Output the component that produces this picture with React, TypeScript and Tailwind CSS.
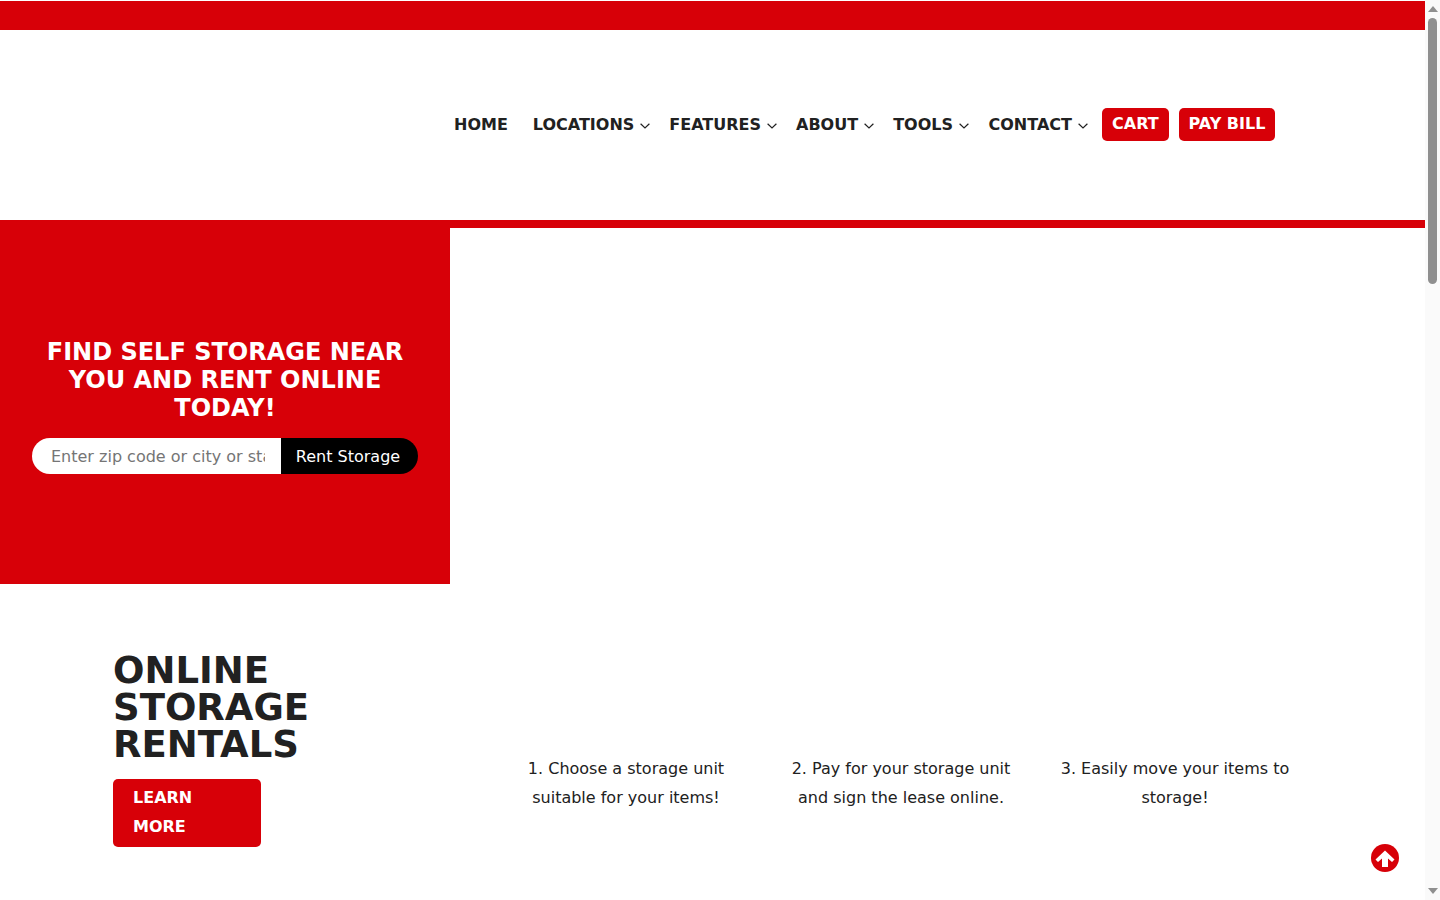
import React from "react";

function Chevron() {
  return (
    <svg width="10" height="6" viewBox="0 0 10 6" fill="none" stroke="#212121" strokeWidth="1.2" className="ml-[6px] mt-[3px]">
      <path d="M0.6 0.8 L5 5 L9.4 0.8" />
    </svg>
  );
}

function NavItem({ label, className }: { label: string; className: string }) {
  return (
    <div className={"flex items-center " + className}>
      <span>{label}</span>
      <Chevron />
    </div>
  );
}

function Step({ text, className }: { text: React.ReactNode; className: string }) {
  return <p className={"text-center text-[16px] leading-[29px] text-[#212121] " + className}>{text}</p>;
}

function Scrollbar() {
  return (
    <aside className="flex h-full w-[15px] shrink-0 flex-col items-center bg-[#fafafa]">
      <svg width="10" height="6" viewBox="0 0 10 6" className="mt-[6px] shrink-0" fill="#8f8f8f">
        <path d="M5 0 L10 6 H0 Z" />
      </svg>
      <div className="mt-[6px] h-[266px] w-[9px] rounded-full bg-[#8f8f8f]" />
      <svg width="10" height="6" viewBox="0 0 10 6" className="mb-[6px] mt-auto shrink-0" fill="#8f8f8f">
        <path d="M0 0 H10 L5 6 Z" />
      </svg>
    </aside>
  );
}

export default function App() {
  return (
    <div className="flex h-screen overflow-hidden bg-white text-[#212121] font-['DejaVu_Sans',sans-serif]">
      <main className="w-[1425px] shrink-0">
        <div className="mt-px h-[29px] bg-[#d70008]" />
        <header className="flex h-[190px] items-center pl-[454px] pb-px text-[16px] font-bold">
          <span className="mr-[25px]">HOME</span>
          <NavItem label="LOCATIONS" className="mr-[19px]" />
          <NavItem label="FEATURES" className="mr-[19px]" />
          <NavItem label="ABOUT" className="mr-[19px]" />
          <NavItem label="TOOLS" className="mr-[19.5px]" />
          <NavItem label="CONTACT" className="mr-[14.5px]" />
          <button className="mr-[10px] flex h-[33px] w-[67px] items-center justify-center rounded-[5px] bg-[#d70008] pb-[2px] pr-px text-white font-bold">CART</button>
          <button className="flex h-[33px] w-[96px] items-center justify-center rounded-[5px] bg-[#d70008] pb-[2px] pr-px text-white font-bold">PAY BILL</button>
        </header>
        <div className="h-[8px] bg-[#d70008]" />
        <section className="flex h-[356px]">
          <div className="flex w-[450px] flex-col items-center justify-center bg-[#d70008] px-[32px] py-[1px]">
            <h1 className="text-center text-[24px] font-bold leading-[28px] text-white">
              FIND SELF STORAGE NEAR YOU AND RENT ONLINE TODAY!
            </h1>
            <div className="mt-[16px] flex h-[36px] w-[386px]">
              <input
                readOnly
                placeholder="Enter zip code or city or state"
                className="h-full w-[249px] rounded-l-full bg-white pl-[19px] pr-[16px] pt-px text-[16px] text-[#212121] outline-none placeholder:text-[#757575]"
              />
              <button className="h-full w-[137px] rounded-r-full bg-black pr-[3px] pt-px text-[16px] text-white">Rent Storage</button>
            </div>
          </div>
        </section>
        <section className="flex pt-[68px]">
          <div className="ml-[113px] w-[215px]">
            <h2 className="text-[37px] font-bold leading-[37px] text-[#212121]">
              ONLINE STORAGE RENTALS
            </h2>
            <button className="mt-[16px] h-[68px] w-[148px] rounded-[5px] bg-[#d70008] pb-[2px] pl-[20px] pr-[40px] text-left text-[16px] font-bold leading-[29px] text-white">
              LEARN MORE
            </button>
          </div>
          <div className="ml-[183px] flex pt-[102px]">
            <Step className="w-[230px]" text={<>1. Choose a storage unit<br />suitable for your items!</>} />
            <Step className="ml-[45px] w-[230px]" text={<>2. Pay for your storage unit<br />and sign the lease online.</>} />
            <Step className="ml-[44px] w-[230px]" text={<>3. Easily move your items to<br />storage!</>} />
          </div>
        </section>
      </main>
      <Scrollbar />
      <button className="fixed bottom-[28px] right-[41px] h-[28px] w-[28px]">
        <svg width="28" height="28" viewBox="0 0 28 28">
          <circle cx="14" cy="14" r="14" fill="#d70008" />
          <path fill="white" d="M14 6.5 L23.5 15.5 L21 18 L17 14.5 V23 H11 V14.5 L7 18 L4.5 15.5 Z" />
        </svg>
      </button>
    </div>
  );
}
